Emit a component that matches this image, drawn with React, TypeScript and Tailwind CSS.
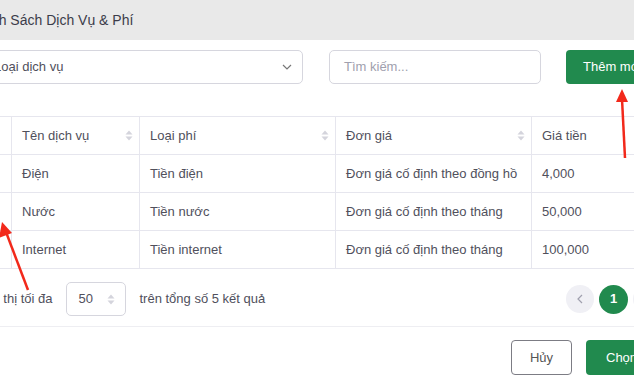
import React from "react";

const rows = [
  { name: "Điện", type: "Tiền điện", unit: "Đơn giá cố định theo đồng hồ", price: "4,000" },
  { name: "Nước", type: "Tiền nước", unit: "Đơn giá cố định theo tháng", price: "50,000" },
  { name: "Internet", type: "Tiền internet", unit: "Đơn giá cố định theo tháng", price: "100,000" },
];

function SortIcon() {
  return (
    <svg width="8" height="11" viewBox="0 0 8 11" className="shrink-0">
      <path d="M4 0.5L7.5 4.5H0.5Z" fill="#d4d4dc" />
      <path d="M4 10.5L7.5 6.5H0.5Z" fill="#d4d4dc" />
    </svg>
  );
}

function HeadCell({ label, w, sort = true }: { label: string; w: string; sort?: boolean }) {
  return (
    <div className={`${w} shrink-0 h-full flex items-center justify-between pl-[10px] pr-[6px] border-r border-[#e6e6ee]`}>
      <span>{label}</span>
      {sort && <SortIcon />}
    </div>
  );
}

export default function App() {
  return (
    <div
      className="relative w-[634px] h-[386px] overflow-hidden bg-white text-[13px] text-[#50505c]"
      style={{ fontFamily: '"Liberation Sans", Arial, sans-serif' }}
    >
      <div className="h-[40px] bg-[#e9e9e9] flex items-center">
        <span className="ml-[-27px] text-[14px] text-[#3c3c4a]">Danh Sách Dịch Vụ &amp; Phí</span>
      </div>

      <div className="mt-[10px] flex h-[34px]">
        <div className="ml-[-20px] w-[323px] shrink-0 h-full border border-[#d6d6de] rounded-[5px] flex items-center justify-between pl-[13px] pr-[10px]">
          <span>Loại dịch vụ</span>
          <svg width="10" height="6" viewBox="0 0 10 6">
            <path d="M1 1l4 4 4-4" fill="none" stroke="#777" strokeWidth="1.2" />
          </svg>
        </div>
        <div className="ml-[26px] w-[212px] shrink-0 h-full border border-[#d6d6de] rounded-[5px] flex items-center pl-[14px] text-[#a0a0ae]">
          Tìm kiếm...
        </div>
        <div className="ml-[25px] w-[110px] shrink-0 h-full bg-[#218a4e] rounded-[4px] flex items-center pl-[17px] text-white">
          Thêm mới
        </div>
      </div>

      <div className="mt-[32px] flex flex-col border-t border-[#e6e6ee]">
        <div className="flex h-[38px] border-b border-[#e6e6ee]">
          <div className="ml-[-40px] w-[52px] shrink-0 h-full border-r border-[#e6e6ee]" />
          <HeadCell label="Tên dịch vụ" w="w-[128px]" />
          <HeadCell label="Loại phí" w="w-[196px]" />
          <HeadCell label="Đơn giá" w="w-[196px]" />
          <HeadCell label="Giá tiền" w="w-[150px]" sort={false} />
        </div>
        {rows.map((r) => (
          <div key={r.name} className="flex h-[38px] border-b border-[#e6e6ee]">
            <div className="ml-[-40px] w-[52px] shrink-0 h-full border-r border-[#e6e6ee]" />
            <div className="w-[128px] shrink-0 flex items-center pl-[10px] border-r border-[#e6e6ee]">{r.name}</div>
            <div className="w-[196px] shrink-0 flex items-center pl-[10px] border-r border-[#e6e6ee]">{r.type}</div>
            <div className="w-[196px] shrink-0 flex items-center pl-[10px] border-r border-[#e6e6ee]">{r.unit}</div>
            <div className="w-[150px] shrink-0 flex items-center pl-[10px] border-r border-[#e6e6ee]">{r.price}</div>
          </div>
        ))}
      </div>

      <div className="mt-[13px] flex items-center h-[34px]">
        <span className="ml-[-27px] shrink-0">Hiển thị tối đa</span>
        <div className="ml-[13px] w-[60px] h-full shrink-0 border border-[#d6d6de] rounded-[5px] flex items-center justify-between pl-[12px] pr-[10px]">
          <span>50</span>
          <SortIcon />
        </div>
        <span className="ml-[14px] shrink-0">trên tổng số 5 kết quả</span>
        <div className="ml-auto flex items-center gap-[5px] mr-[-27px]">
          <div className="w-[28px] h-[28px] rounded-full bg-[#f0f0f5] flex items-center justify-center">
            <svg width="6" height="10" viewBox="0 0 6 10">
              <path d="M5 1L1 5l4 4" fill="none" stroke="#a0a0ae" strokeWidth="1.2" />
            </svg>
          </div>
          <div className="w-[29px] h-[29px] rounded-full bg-[#218a4e] text-white font-bold flex items-center justify-center">1</div>
          <div className="w-[28px] h-[28px] rounded-full bg-[#f0f0f5]" />
        </div>
      </div>

      <div className="mt-[10px] border-t border-[#eeeef2]" />

      <div className="mt-[13px] flex justify-end gap-[14px] mr-[-40px] h-[35px]">
        <div className="w-[61px] h-full border border-[#7c7c84] rounded-[4px] flex items-center justify-center text-[#555]">Hủy</div>
        <div className="w-[88px] h-full bg-[#218a4e] rounded-[4px] flex items-center pl-[20px] text-white">Chọn</div>
      </div>

      <svg className="absolute inset-0 pointer-events-none" width="634" height="386">
        <line x1="28" y1="290" x2="6" y2="232" stroke="#f2291b" strokeWidth="2.5" />
        <path d="M2 222L-1 238L12 233Z" fill="#f2291b" />
        <line x1="625" y1="158" x2="622" y2="99" stroke="#f2291b" strokeWidth="2.5" />
        <path d="M622 89L616 102L628 102Z" fill="#f2291b" />
      </svg>
    </div>
  );
}
